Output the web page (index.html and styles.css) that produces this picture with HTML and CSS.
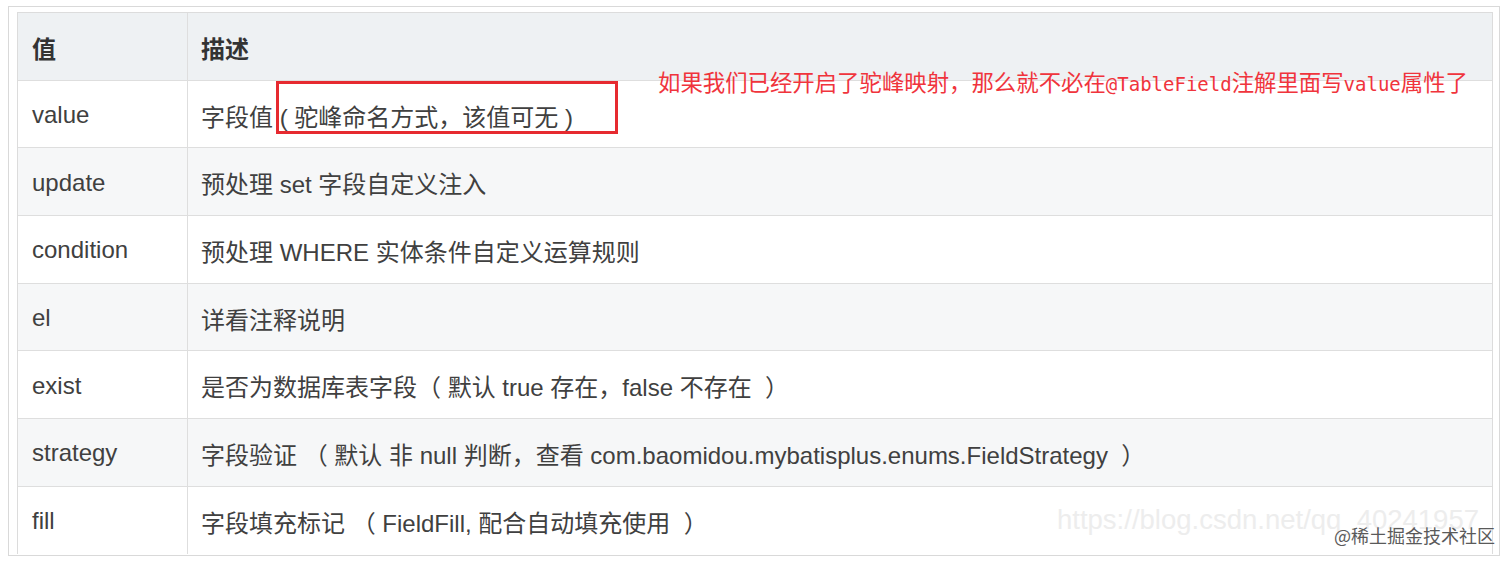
FILE: index.html
```html
<!DOCTYPE html>
<html lang="zh-CN">
<head>
<meta charset="utf-8">
<title>TableField</title>
<link rel="stylesheet" href="styles.css">
</head>
<body>
<div class="frame">
  <div class="tbl">
    <div class="row head">
      <div class="c1">值</div>
      <div class="c2">描述</div>
    </div>
    <div class="row">
      <div class="c1">value</div>
      <div class="c2">字段值 ( 驼峰命名方式，该值可无 )</div>
    </div>
    <div class="row alt">
      <div class="c1">update</div>
      <div class="c2">预处理 set 字段自定义注入</div>
    </div>
    <div class="row">
      <div class="c1">condition</div>
      <div class="c2">预处理 WHERE 实体条件自定义运算规则</div>
    </div>
    <div class="row alt">
      <div class="c1">el</div>
      <div class="c2">详看注释说明</div>
    </div>
    <div class="row">
      <div class="c1">exist</div>
      <div class="c2">是否为数据库表字段（ 默认 true 存在，false 不存在 &nbsp;）</div>
    </div>
    <div class="row alt">
      <div class="c1">strategy</div>
      <div class="c2">字段验证 （ 默认 非 null 判断，查看 com.baomidou.mybatisplus.enums.FieldStrategy &nbsp;）</div>
    </div>
    <div class="row">
      <div class="c1">fill</div>
      <div class="c2">字段填充标记 （ FieldFill, 配合自动填充使用 &nbsp;）</div>
    </div>
  </div>
</div>
<div class="mark-box"></div>
<div class="note">如果我们已经开启了驼峰映射，那么就不必在<span class="mono">@TableField</span>注解里面写<span class="mono">value</span>属性了</div>
<div class="wm-url">https://blog.csdn.net/qq_40241957</div>
<div class="wm-site">@稀土掘金技术社区</div>
</body>
</html>
```
FILE: styles.css
```css
html, body {
  margin: 0;
  padding: 0;
  background: #fff;
}
body {
  position: relative;
  width: 1512px;
  height: 562px;
  overflow: hidden;
  font-family: "Liberation Sans", Arial, "Noto Sans CJK SC", sans-serif;
}
.frame {
  box-sizing: border-box;
  margin: 6px 0 0 8px;
  width: 1492px;
  height: 550px;
  border: 1px solid #d9d9d9;
  padding: 5px 0 0 8px;
}
.tbl {
  box-sizing: border-box;
  width: 1476px;
  height: 542px;
  border: 1px solid #dcdcdc;
  border-bottom: none;
  overflow: hidden;
}
.row {
  box-sizing: border-box;
  display: grid;
  grid-template-columns: 170px 1fr;
  height: 67.7px;
  border-bottom: 1px solid #dedede;
  background: #fff;
  color: #404040;
  font-size: 24px;
}
.row.alt {
  background: #f6f7f8;
}
.row.head {
  background: #eef1f3;
  font-weight: bold;
  color: #333;
}
.c1, .c2 {
  display: flex;
  align-items: center;
  white-space: nowrap;
  padding-top: 2px;
}
.c1 {
  padding-left: 14px;
  border-right: 1px solid #dedede;
}
.c2 {
  padding-left: 13px;
}
.mark-box {
  position: absolute;
  left: 276px;
  top: 81px;
  width: 342px;
  height: 53px;
  box-sizing: border-box;
  border: 3px solid #e62a30;
}
.note {
  position: absolute;
  left: 658px;
  top: 69px;
  font-family: "Noto Sans CJK SC", sans-serif;
  font-size: 22.4px;
  line-height: 24px;
  color: #f0343c;
  white-space: nowrap;
}
.note .mono {
  font-family: "DejaVu Sans Mono", "Liberation Mono", monospace;
  font-size: 19px;
}
.wm-url {
  position: absolute;
  left: 1057px;
  top: 503px;
  font-family: "Liberation Sans", Arial, sans-serif;
  font-size: 27.5px;
  line-height: 34px;
  color: #ededed;
  white-space: nowrap;
}
.wm-site {
  position: absolute;
  left: 1334px;
  top: 524px;
  font-family: "Noto Sans CJK SC", sans-serif;
  font-size: 18px;
  line-height: 22px;
  color: #5a5a5a;
  white-space: nowrap;
}
```
